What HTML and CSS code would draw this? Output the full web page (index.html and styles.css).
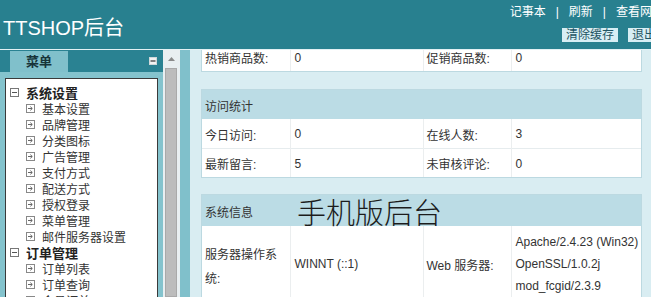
FILE: index.html
```html
<!DOCTYPE html>
<html lang="zh-CN">
<head>
<meta charset="utf-8">
<title>TTSHOP后台</title>
<link rel="stylesheet" href="styles.css">
</head>
<body>
<header class="topbar">
  <div class="brand">TTSHOP后台</div>
  <div class="top-right">
    <div class="links"><span>记事本</span><span class="sep">|</span><span>刷新</span><span class="sep">|</span><span>查看网站</span></div>
    <div class="btns"><span class="btn">清除缓存</span><span class="btn">退出</span></div>
  </div>
</header>
<div class="layout">
  <aside class="sidebar">
    <div class="menu-head">
      <span class="tab">菜单</span>
      <svg class="collapse" width="8" height="8" viewBox="0 0 8 8"><rect x="0.5" y="0.5" width="7" height="7" fill="#f2f2f2" stroke="#cfd8da"/><line x1="1.5" y1="4" x2="6.5" y2="4" stroke="#333" stroke-width="1.2"/></svg>
    </div>
    <div class="menu-body">
      <div class="tree">
        <div class="group"><svg class="ico" width="9" height="9" viewBox="0 0 9 9"><rect x="0.5" y="0.5" width="8" height="8" fill="none" stroke="#777"/><line x1="2" y1="4.5" x2="7" y2="4.5" stroke="#555"/></svg>系统设置</div>
        <div class="item"><svg class="ico" width="9" height="9" viewBox="0 0 9 9"><rect x="0.5" y="0.5" width="8" height="8" fill="none" stroke="#888"/><path d="M2 4.5H6M4.3 2.6L6.3 4.5L4.3 6.4" fill="none" stroke="#666"/></svg>基本设置</div>
        <div class="item"><svg class="ico" width="9" height="9" viewBox="0 0 9 9"><rect x="0.5" y="0.5" width="8" height="8" fill="none" stroke="#888"/><path d="M2 4.5H6M4.3 2.6L6.3 4.5L4.3 6.4" fill="none" stroke="#666"/></svg>品牌管理</div>
        <div class="item"><svg class="ico" width="9" height="9" viewBox="0 0 9 9"><rect x="0.5" y="0.5" width="8" height="8" fill="none" stroke="#888"/><path d="M2 4.5H6M4.3 2.6L6.3 4.5L4.3 6.4" fill="none" stroke="#666"/></svg>分类图标</div>
        <div class="item"><svg class="ico" width="9" height="9" viewBox="0 0 9 9"><rect x="0.5" y="0.5" width="8" height="8" fill="none" stroke="#888"/><path d="M2 4.5H6M4.3 2.6L6.3 4.5L4.3 6.4" fill="none" stroke="#666"/></svg>广告管理</div>
        <div class="item"><svg class="ico" width="9" height="9" viewBox="0 0 9 9"><rect x="0.5" y="0.5" width="8" height="8" fill="none" stroke="#888"/><path d="M2 4.5H6M4.3 2.6L6.3 4.5L4.3 6.4" fill="none" stroke="#666"/></svg>支付方式</div>
        <div class="item"><svg class="ico" width="9" height="9" viewBox="0 0 9 9"><rect x="0.5" y="0.5" width="8" height="8" fill="none" stroke="#888"/><path d="M2 4.5H6M4.3 2.6L6.3 4.5L4.3 6.4" fill="none" stroke="#666"/></svg>配送方式</div>
        <div class="item"><svg class="ico" width="9" height="9" viewBox="0 0 9 9"><rect x="0.5" y="0.5" width="8" height="8" fill="none" stroke="#888"/><path d="M2 4.5H6M4.3 2.6L6.3 4.5L4.3 6.4" fill="none" stroke="#666"/></svg>授权登录</div>
        <div class="item"><svg class="ico" width="9" height="9" viewBox="0 0 9 9"><rect x="0.5" y="0.5" width="8" height="8" fill="none" stroke="#888"/><path d="M2 4.5H6M4.3 2.6L6.3 4.5L4.3 6.4" fill="none" stroke="#666"/></svg>菜单管理</div>
        <div class="item"><svg class="ico" width="9" height="9" viewBox="0 0 9 9"><rect x="0.5" y="0.5" width="8" height="8" fill="none" stroke="#888"/><path d="M2 4.5H6M4.3 2.6L6.3 4.5L4.3 6.4" fill="none" stroke="#666"/></svg>邮件服务器设置</div>
        <div class="group"><svg class="ico" width="9" height="9" viewBox="0 0 9 9"><rect x="0.5" y="0.5" width="8" height="8" fill="none" stroke="#777"/><line x1="2" y1="4.5" x2="7" y2="4.5" stroke="#555"/></svg>订单管理</div>
        <div class="item"><svg class="ico" width="9" height="9" viewBox="0 0 9 9"><rect x="0.5" y="0.5" width="8" height="8" fill="none" stroke="#888"/><path d="M2 4.5H6M4.3 2.6L6.3 4.5L4.3 6.4" fill="none" stroke="#666"/></svg>订单列表</div>
        <div class="item"><svg class="ico" width="9" height="9" viewBox="0 0 9 9"><rect x="0.5" y="0.5" width="8" height="8" fill="none" stroke="#888"/><path d="M2 4.5H6M4.3 2.6L6.3 4.5L4.3 6.4" fill="none" stroke="#666"/></svg>订单查询</div>
        <div class="item"><svg class="ico" width="9" height="9" viewBox="0 0 9 9"><rect x="0.5" y="0.5" width="8" height="8" fill="none" stroke="#888"/><path d="M2 4.5H6M4.3 2.6L6.3 4.5L4.3 6.4" fill="none" stroke="#666"/></svg>会员订单</div>
      </div>
    </div>
  </aside>
  <div class="vscroll">
    <div class="arrow"><svg width="7" height="4" viewBox="0 0 7 4"><polygon points="3.5,0 7,4 0,4" fill="#8a8a8a"/></svg></div>
    <div class="thumb"></div>
  </div>
  <div class="splitter"></div>
  <main class="main">
    <section class="box box-cut">
      <table class="grid">
        <colgroup><col class="c1"><col class="c2"><col class="c3"><col class="c4"></colgroup>
        <tr><td>热销商品数:</td><td>0</td><td>促销商品数:</td><td>0</td></tr>
      </table>
    </section>
    <section class="box box-gap">
      <div class="box-head">访问统计</div>
      <table class="grid">
        <colgroup><col class="c1"><col class="c2"><col class="c3"><col class="c4"></colgroup>
        <tr><td>今日访问:</td><td>0</td><td>在线人数:</td><td>3</td></tr>
        <tr><td>最新留言:</td><td>5</td><td>未审核评论:</td><td>0</td></tr>
      </table>
    </section>
    <section class="box">
      <div class="box-head"><span>系统信息</span><span class="wm">手机版后台</span></div>
      <table class="grid">
        <colgroup><col class="c1"><col class="c2"><col class="c3"><col class="c4"></colgroup>
        <tr class="tall"><td class="wrap">服务器操作系统:</td><td>WINNT (::1)</td><td>Web 服务器:</td><td class="multi">Apache/2.4.23 (Win32)<br>OpenSSL/1.0.2j<br>mod_fcgid/2.3.9</td></tr>
      </table>
    </section>
  </main>
</div>
</body>
</html>
```
FILE: styles.css
```css
* { box-sizing: border-box; }

html, body {
  margin: 0;
  width: 651px;
  height: 297px;
  overflow: hidden;
}

body {
  font-family: "Liberation Sans", "Noto Sans CJK SC", sans-serif;
  font-size: 12px;
  color: #333;
  background: #d9edf2;
}

.topbar {
  height: 50px;
  background: #28808f;
  border-bottom: 1px solid #e3f1f4;
  display: flex;
  justify-content: space-between;
}

.brand {
  color: #fff;
  font-size: 20px;
  line-height: 24px;
  margin-top: 16px;
  padding-left: 3px;
}

.top-right {
  display: flex;
  flex-direction: column;
  align-items: flex-end;
  margin-right: -9px;
  padding-top: 4px;
}

.links {
  display: flex;
  color: #fff;
  line-height: 16px;
  margin-right: -4px;
}

.sep { margin: 0 10px; }

.btns {
  display: flex;
  gap: 10px;
  margin-top: 8px;
}

.btn {
  background: #d7eef4;
  color: #1f5563;
  line-height: 14px;
  padding: 0 4px;
}

.layout {
  display: flex;
  height: 247px;
}

.sidebar {
  width: 163px;
  flex: none;
  background: #84c3cd;
  display: flex;
  flex-direction: column;
}

.menu-head {
  height: 22px;
  flex: none;
  background: #2a8292;
  display: flex;
  align-items: flex-end;
  justify-content: space-between;
  padding: 0 6px 0 10px;
}

.tab {
  width: 58px;
  height: 21px;
  background: #80c0cb;
  font-weight: bold;
  font-size: 13px;
  line-height: 21px;
  color: #17343a;
  text-align: center;
}

.collapse {
  align-self: center;
  display: block;
}

.menu-body {
  flex: 1;
  padding: 6px 5px 0 5px;
  min-height: 0;
}

.tree {
  background: #fff;
  border: 1px solid #3a3a3a;
  border-bottom: none;
  height: 100%;
  padding-top: 5px;
  overflow: hidden;
}

.group, .item {
  display: flex;
  align-items: center;
  height: 16px;
  gap: 7px;
  white-space: nowrap;
}

.group {
  padding-left: 4px;
  font-weight: bold;
  font-size: 13px;
  color: #222;
}

.item {
  padding-left: 20px;
  color: #333;
}

.ico { flex: none; display: block; }

.vscroll {
  width: 17px;
  flex: none;
  background: #e9eff1;
  padding: 0 3px 0 2px;
  display: flex;
  flex-direction: column;
}

.arrow {
  height: 18px;
  display: flex;
  align-items: center;
  justify-content: center;
}

.thumb {
  flex: 1;
  background: #bcbcbc;
  border: 1px solid #a9a9a9;
}

.splitter {
  width: 10px;
  flex: none;
  background: #80c0cb;
}

.main {
  flex: 1;
  padding: 0 9px 0 11px;
  overflow: hidden;
}

.box {
  background: #fff;
  border: 1px solid #bcd9e1;
  margin-top: 16px;
}

.box-cut { margin-top: -9px; }

.box-gap { margin-top: 17px; }

.box-head {
  min-height: 29px;
  background: #bbdce5;
  display: flex;
  align-items: center;
  padding-left: 3px;
  padding-top: 1px;
  color: #333;
}

.wm {
  font-family: "Noto Sans CJK SC", sans-serif;
  font-weight: 300;
  font-size: 29px;
  line-height: 30px;
  color: #1c1c1c;
  margin-left: 44px;
}

.grid {
  width: 100%;
  border-collapse: collapse;
  table-layout: fixed;
}

.c1 { width: 88px; }
.c2 { width: 133px; }
.c3 { width: 88px; }
.c4 { width: 130px; }

.grid td {
  height: 29px;
  padding: 2px 4px 0 3px;
  vertical-align: middle;
  border-left: 1px solid #ebeeef;
  color: #333;
}

.grid td:first-child { border-left: none; }

.grid td:nth-child(even) { padding-left: 4px; }

.grid tr + tr td { border-top: 1px solid #e6ecee; }

.grid .tall td { padding-top: 5px; padding-bottom: 3px; }

.grid .tall .wrap { line-height: 24px; padding-top: 11px; }

.grid .multi { line-height: 22px; white-space: nowrap; }
```
